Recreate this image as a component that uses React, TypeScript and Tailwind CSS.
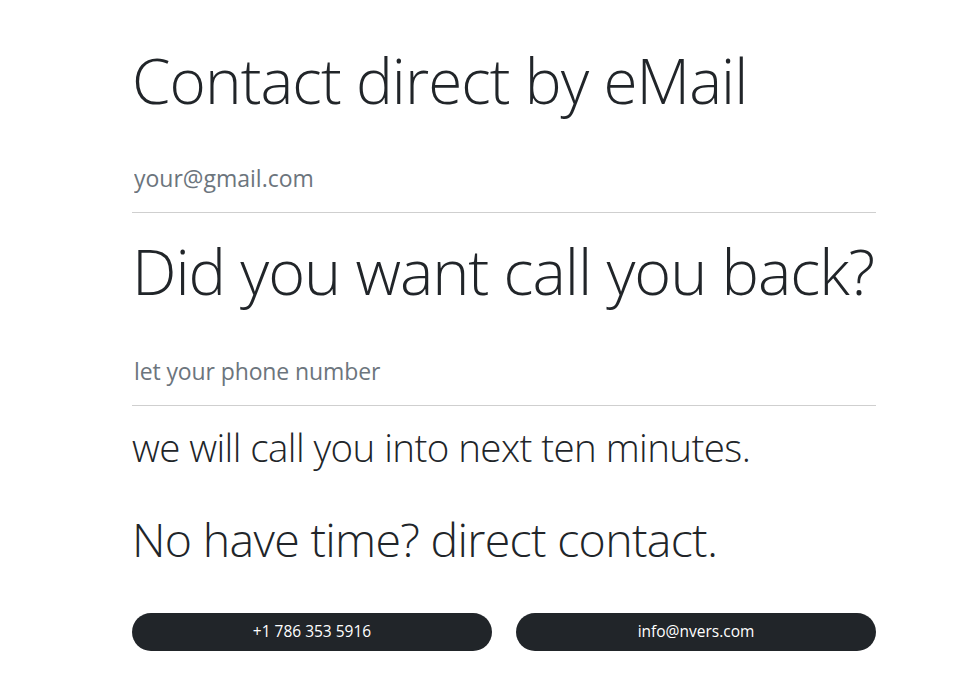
export default function App() {
  const font = { fontFamily: '"Open Sans", "Noto Sans", sans-serif' };
  return (
    <div className="bg-white min-h-screen" style={font}>
      <div className="ml-[132px] w-[744px] flex flex-col text-[#212529]">
        <h1 className="mt-[49px] text-[62px] leading-none font-light tracking-[-0.015em] whitespace-nowrap">
          Contact direct by eMail
        </h1>
        <input
          type="email"
          placeholder="your@gmail.com"
          className="mt-[33px] h-[69px] p-0 pl-[2px] text-[23px] border-b border-[#cfcfcf] outline-none bg-transparent placeholder:text-[#6c757d]"
        />
        <h2 className="mt-[26px] text-[63px] leading-none font-light tracking-[-0.017em] whitespace-nowrap">
          Did you want call you back?
        </h2>
        <input
          type="tel"
          placeholder="let your phone number"
          className="mt-[35px] h-[69px] p-0 pl-[2px] text-[23px] tracking-[-0.005em] border-b border-[#cfcfcf] outline-none bg-transparent placeholder:text-[#6c757d]"
        />
        <p className="mt-[22px] text-[38.5px] leading-[38px] font-light tracking-[-0.015em] whitespace-nowrap">
          we will call you into next ten minutes.
        </p>
        <h3 className="mt-[50px] text-[46.5px] leading-[46px] font-light tracking-[-0.015em] whitespace-nowrap">
          No have time? direct contact.
        </h3>
        <div className="mt-[51px] grid grid-cols-2 gap-6">
          <a className="h-[38px] rounded-full bg-[#212529] text-white text-[15.5px] flex items-center justify-center">
            +1 786 353 5916
          </a>
          <a className="h-[38px] rounded-full bg-[#212529] text-white text-[15.5px] flex items-center justify-center">
            info@nvers.com
          </a>
        </div>
      </div>
    </div>
  );
}
